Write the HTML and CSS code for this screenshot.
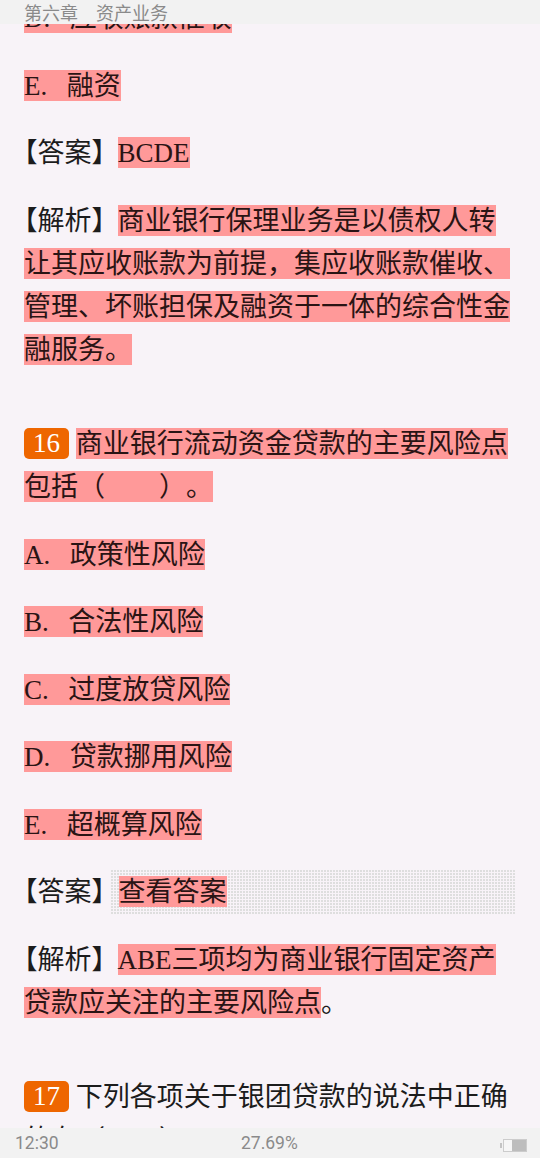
FILE: index.html
```html
<!DOCTYPE html>
<html lang="zh-CN">
<head>
<meta charset="utf-8">
<title>第六章 资产业务</title>
<link rel="stylesheet" href="styles.css">
</head>
<body>
<div class="screen">
  <header class="top-bar">第六章　资产业务</header>
  <main class="doc">
    <p class="para option"><span class="hl">D.&nbsp;&nbsp;&nbsp;应收账款催收</span></p>
    <p class="para option"><span class="hl">E.&nbsp;&nbsp;&nbsp;融资</span></p>
    <p class="para"><span class="label">【答案】</span><span class="hl">BCDE</span></p>
    <p class="para"><span class="label">【解析】</span><span class="hl">商业银行保理业务是以债权人转让其应收账款为前提，集应收账款催收、管理、坏账担保及融资于一体的综合性金融服务。</span></p>
    <p class="para question"><span class="badge">16</span>&nbsp;<span class="hl">商业银行流动资金贷款的主要风险点包括（&nbsp;&nbsp;&nbsp;&nbsp;&nbsp;&nbsp;&nbsp;&nbsp;）。</span></p>
    <p class="para option"><span class="hl">A.&nbsp;&nbsp;&nbsp;政策性风险</span></p>
    <p class="para option"><span class="hl">B.&nbsp;&nbsp;&nbsp;合法性风险</span></p>
    <p class="para option"><span class="hl">C.&nbsp;&nbsp;&nbsp;过度放贷风险</span></p>
    <p class="para option"><span class="hl">D.&nbsp;&nbsp;&nbsp;贷款挪用风险</span></p>
    <p class="para option"><span class="hl">E.&nbsp;&nbsp;&nbsp;超概算风险</span></p>
    <div class="para answer-row"><span class="label">【答案】</span><span class="reveal"><span class="hl">查看答案</span></span></div>
    <p class="para"><span class="label">【解析】</span><span class="hl">ABE三项均为商业银行固定资产贷款应关注的主要风险点</span>。</p>
    <p class="para question"><span class="badge">17</span>&nbsp;下列各项关于银团贷款的说法中正确的有（&nbsp;&nbsp;&nbsp;&nbsp;&nbsp;&nbsp;&nbsp;&nbsp;）。</p>
  </main>
  <footer class="bottom-bar">
    <span class="time">12:30</span>
    <span class="percent">27.69%</span>
    <span class="battery"><span class="battery-nub"></span><span class="battery-body"><span class="battery-fill"></span></span></span>
  </footer>
</div>
</body>
</html>
```

FILE: styles.css
```css
* { box-sizing: border-box; }
html, body { margin: 0; padding: 0; }
body { background: #f8f3f8; }
.screen {
  position: relative;
  width: 540px;
  height: 1158px;
  overflow: hidden;
  font-family: "Liberation Serif", "Noto Sans CJK SC", serif;
  color: #1c1c1c;
  text-spacing-trim: space-all;
}
.top-bar {
  position: absolute;
  top: 0; left: 0; right: 0;
  height: 24px;
  padding-left: 24px;
  background: #f2f2f2;
  color: #8a8a8a;
  font: 18px/24px "Noto Sans CJK SC", sans-serif;
  z-index: 2;
}
.bottom-bar {
  position: absolute;
  bottom: 0; left: 0; right: 0;
  height: 30px;
  background: #f2f2f2;
  color: #8a8a8a;
  font: 17.5px/30px Roboto, sans-serif;
  z-index: 2;
}
.time { position: absolute; left: 15px; top: 0; }
.percent { position: absolute; left: 241px; top: 0; }
.battery { position: absolute; left: 500px; top: 11px; display: flex; align-items: center; height: 13px; }
.battery-nub { width: 2px; height: 5px; background: #c4c4c4; margin-right: 1px; }
.battery-body { display: flex; justify-content: flex-end; width: 24px; height: 13px; border: 1px solid #ccc; background: #f6f6f6; }
.battery-fill { width: 14px; background: #bdbdbd; }
.doc {
  margin-top: -3px;
  padding: 0 24px;
  font-size: 27px;
  line-height: 43px;
}
.para { margin: 0 0 24.5px; }
.option { word-spacing: -0.25px; }
.question { margin-top: 51.5px; }
.hl { padding-top: 1px; background: #ff9999; color: #2a1414; }
.label { margin-left: -13.5px; margin-right: -1px; }
.badge {
  display: inline-block;
  height: 31px;
  padding: 0 9px;
  border-radius: 5px;
  background: #ee6600;
  color: #fff;
  line-height: 31px;
  vertical-align: 1px;
}
.answer-row { display: flex; }
.reveal {
  flex: 1;
  margin: -1px 0 0 -7px;
  padding: 1px 0 0 8px;
  background-image: conic-gradient(from 270deg at 2px 2px, #dedede 25%, transparent 0);
  background-size: 3px 3px;
}
```
